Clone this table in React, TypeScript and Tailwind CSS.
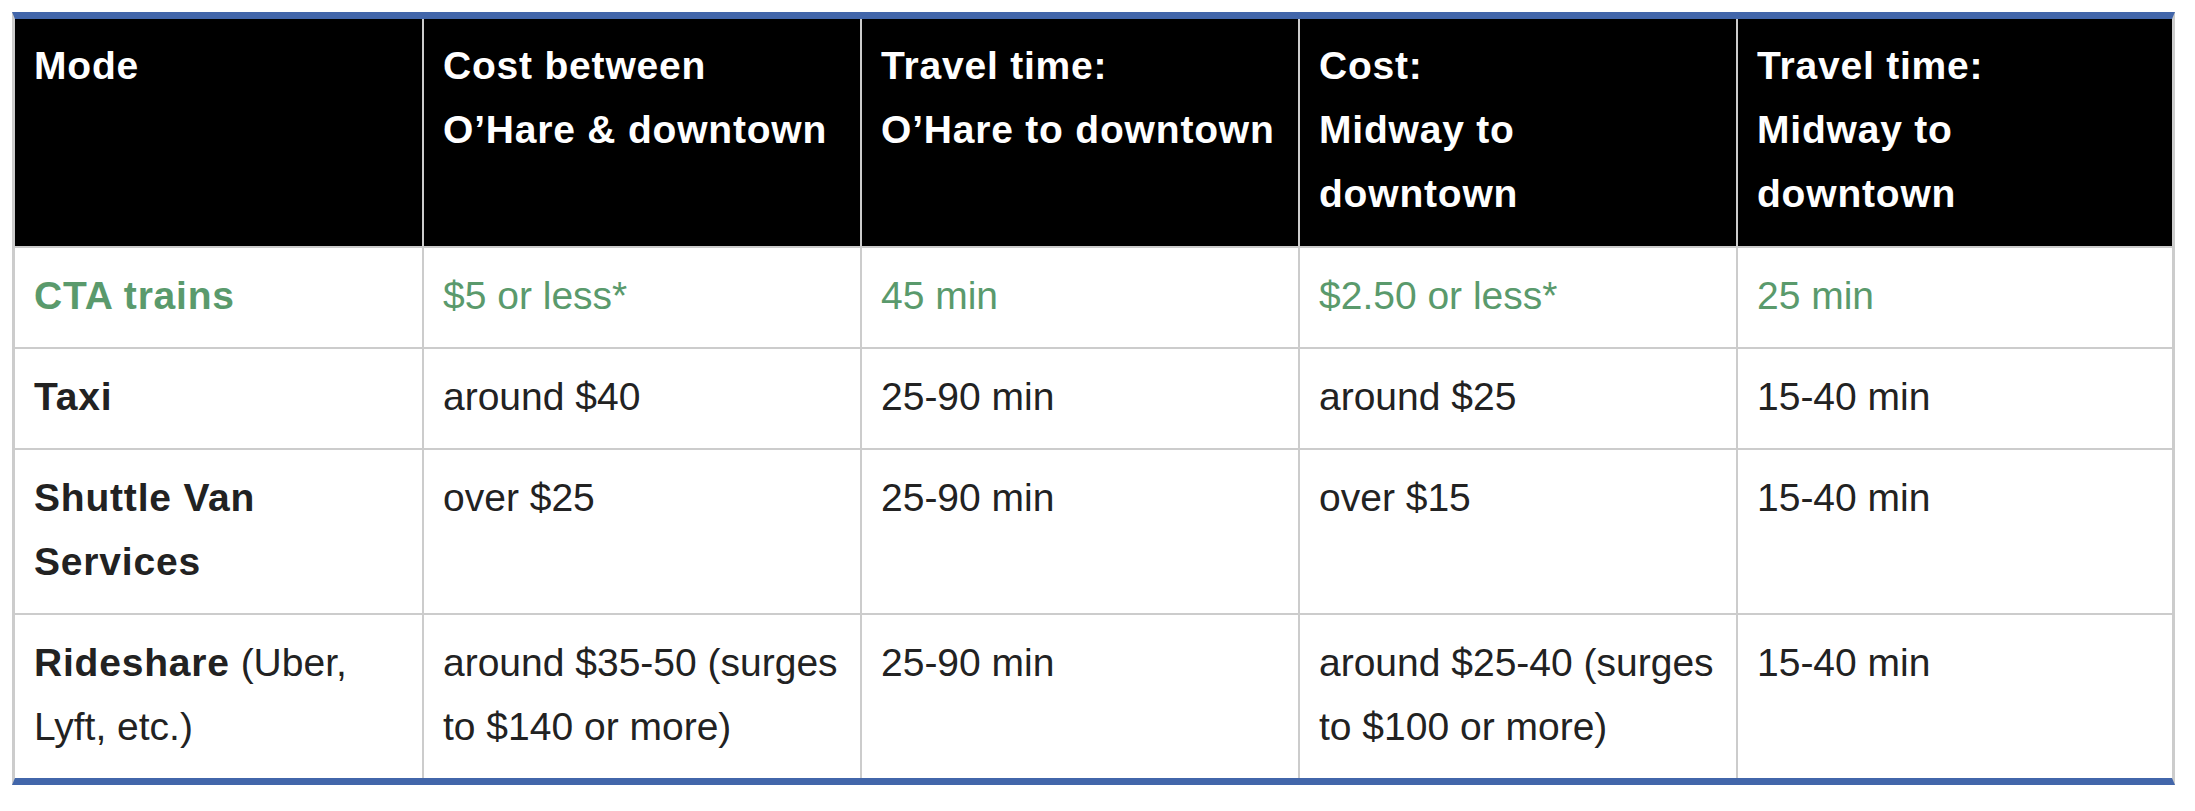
const rows: { mode: React.ReactNode; cells: string[]; green?: boolean }[] = [
  {
    mode: <strong className="tracking-[0.8px]">CTA trains</strong>,
    cells: ["$5 or less*", "45 min", "$2.50 or less*", "25 min"],
    green: true,
  },
  {
    mode: <strong className="tracking-[0.8px]">Taxi</strong>,
    cells: ["around $40", "25-90 min", "around $25", "15-40 min"],
  },
  {
    mode: <strong className="tracking-[0.8px]">Shuttle Van Services</strong>,
    cells: ["over $25", "25-90 min", "over $15", "15-40 min"],
  },
  {
    mode: (
      <>
        <strong className="tracking-[0.8px]">Rideshare</strong> (Uber, Lyft, etc.)
      </>
    ),
    cells: [
      "around $35-50 (surges to $140 or more)",
      "25-90 min",
      "around $25-40 (surges to $100 or more)",
      "15-40 min",
    ],
  },
];

const headers = [
  ["Mode"],
  ["Cost between", "O’Hare & downtown"],
  ["Travel time:", "O’Hare to downtown"],
  ["Cost:", "Midway to", "downtown"],
  ["Travel time:", "Midway to", "downtown"],
];

export default function App() {
  return (
    <div className="min-h-screen bg-white pt-[12px] pl-[12px] font-['Liberation_Sans',Arial,sans-serif] text-[39px] leading-[64px]">
      {/* Comparison table */}
      <div className="w-[2163px] border-x-[3px] border-x-[#cccccc] border-y-[7px] border-t-[#4266aa] border-b-[#4266aa] bg-[#cccccc]">
        <div className="grid grid-cols-[407px_436px_436px_436px_434px] gap-x-[2px] gap-y-[2px]">
          {headers.map((lines) => (
            <div
              key={lines.join(" ")}
              className="bg-black pl-[19px] pr-[8px] pt-[15px] pb-[20px] font-bold tracking-[0.8px] whitespace-nowrap text-white"
            >
              {lines.map((l, k) => (
                <div key={k}>{l}</div>
              ))}
            </div>
          ))}
          {rows.map((row, i) => (
            <div key={i} className="contents">
              <div
                className={`bg-white pl-[19px] pr-[8px] pt-[16px] pb-[19px] ${
                  row.green ? "text-[#5a9a6c]" : "text-[#222222]"
                }`}
              >
                {row.mode}
              </div>
              {row.cells.map((c, j) => (
                <div
                  key={j}
                  className={`bg-white pl-[19px] pr-[8px] pt-[16px] pb-[19px] ${
                    row.green ? "text-[#5a9a6c]" : "text-[#222222]"
                  }`}
                >
                  {c}
                </div>
              ))}
            </div>
          ))}
        </div>
      </div>
    </div>
  );
}
